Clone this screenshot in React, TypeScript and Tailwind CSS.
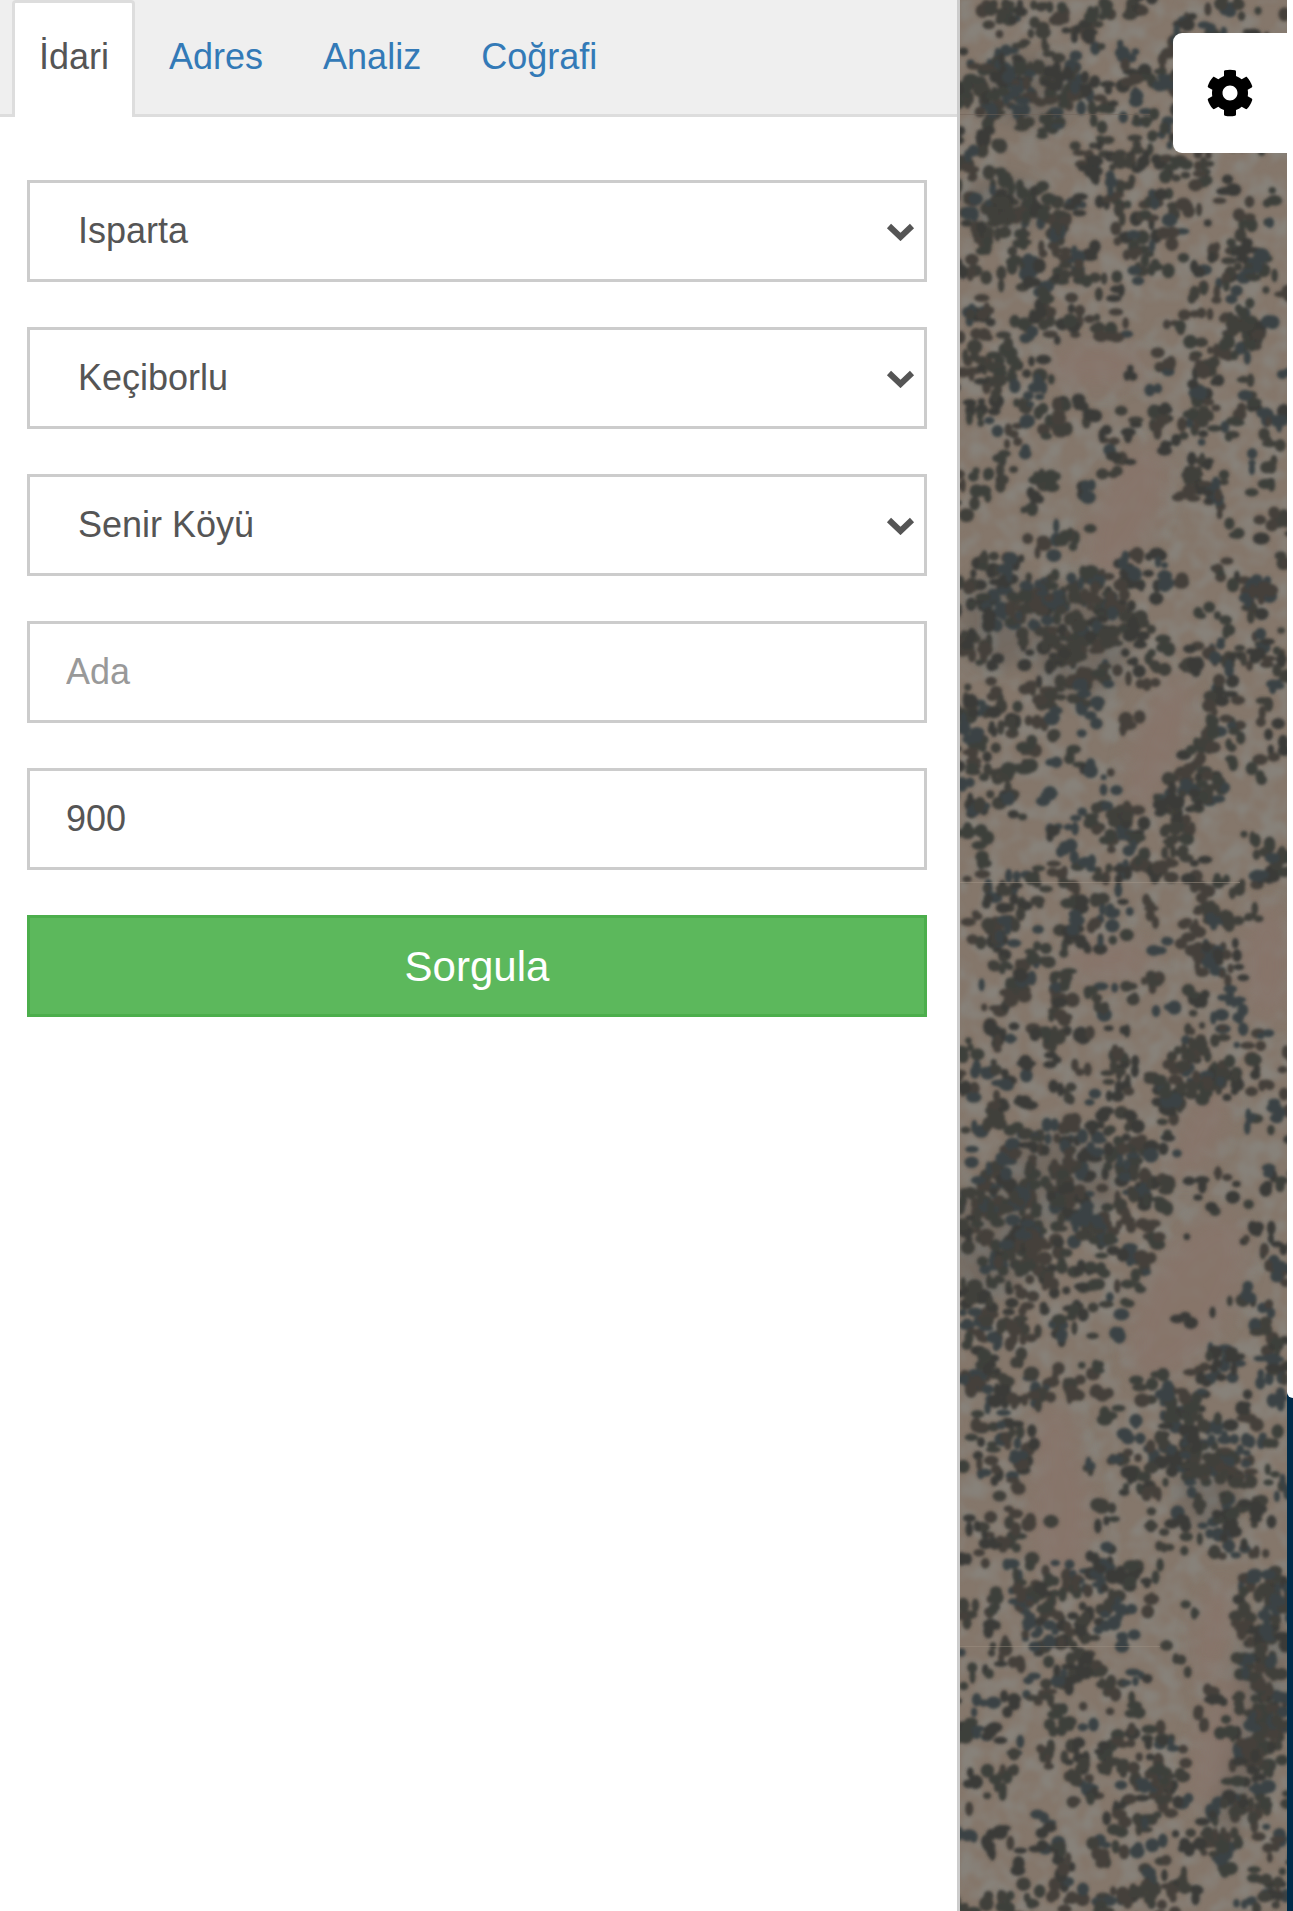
import { FaCog } from "react-icons/fa";

const tabs = ["Adres", "Analiz", "Coğrafi"];
const selects = ["Isparta", "Keçiborlu", "Senir Köyü"];

// clearings in the aerial photo: [cx, cy, rx, ry, rotation]
const clearings = [
  [167, 512, 30, 70, 25],
  [198, 743, 24, 70, 20],
  [228, 1298, 42, 92, 30],
  [100, 1511, 30, 70, 0],
  [253, 1633, 16, 50, 10],
  [240, 1133, 20, 50, 25],
  [307, 963, 24, 60, 0],
  [258, 1740, 22, 68, 15],
  [137, 365, 50, 22, 0],
  [150, 960, 46, 20, 0],
  [95, 1440, 22, 34, 0],
];

// darker stands of trees
const stands = [
  [70, 90, 50, 34, 0],
  [40, 205, 40, 28, 0],
  [290, 1720, 26, 120, 12],
  [30, 1240, 40, 60, 0],
  [100, 1180, 60, 50, 0],
  [120, 640, 50, 60, 0],
  [250, 1490, 34, 40, 0],
  [40, 620, 40, 50, 0],
];

function inEllipse(x: number, y: number, e: number[], grow: number) {
  const a = (-e[4] * Math.PI) / 180;
  const dx = x - e[0];
  const dy = y - e[1];
  const u = (dx * Math.cos(a) - dy * Math.sin(a)) / (e[2] * grow);
  const v = (dx * Math.sin(a) + dy * Math.cos(a)) / (e[3] * grow);
  return u * u + v * v < 1;
}

// seeded scatter, so the trees land in the same place on every load
function makeTrees() {
  let s = 20240611;
  const rnd = () => {
    s = (s + 0x6d2b79f5) | 0;
    let t = Math.imul(s ^ (s >>> 15), 1 | s);
    t = (t + Math.imul(t ^ (t >>> 7), 61 | t)) ^ t;
    return ((t ^ (t >>> 14)) >>> 0) / 4294967296;
  };
  const colors = ["#3a3b38", "#3e3f3b", "#413f3a", "#3b4345", "#45413b"];
  const out: { x: number; y: number; rx: number; ry: number; c: string }[] = [];
  for (let i = 0; i < 9000; i++) {
    const x = rnd() * 327;
    const y = rnd() * 1911;
    let p = 0.2 + 0.08 * Math.sin(x / 37 + y / 53) + 0.06 * Math.sin(y / 91 - x / 29);
    if (stands.some((e) => inEllipse(x, y, e, 1.2))) p = 0.5;
    if (clearings.some((e) => inEllipse(x, y, e, 1))) p = 0.01;
    if (rnd() > p) continue;
    // crowns grow in small clumps
    const clump = 1 + Math.floor(rnd() * 4);
    const c = colors[Math.floor(rnd() * colors.length)];
    for (let j = 0; j < clump; j++) {
      out.push({
        x: x + (rnd() - 0.5) * 20,
        y: y + (rnd() - 0.5) * 20,
        rx: 3 + rnd() * 5,
        ry: 3 + rnd() * 4.5,
        c,
      });
    }
  }
  return out;
}

const trees = makeTrees();

function AerialPhoto() {
  return (
    <svg className="block w-full h-full" viewBox="0 0 327 1911" preserveAspectRatio="none">
      <defs>
        <filter id="ground" x="0" y="0" width="100%" height="100%" colorInterpolationFilters="sRGB">
          <feTurbulence type="fractalNoise" baseFrequency="0.05" numOctaves="2" seed="11" />
          <feColorMatrix values="0 0 0 0 0.53  0 0 0 0 0.51  0 0 0 0 0.48  3 0 0 0 -1.2" />
          <feGaussianBlur stdDeviation="1.5" />
        </filter>
        <filter id="crowns" x="0" y="0" width="100%" height="100%">
          <feGaussianBlur stdDeviation="1.4" />
        </filter>
        <filter id="soft" x="-50%" y="-50%" width="200%" height="200%">
          <feGaussianBlur stdDeviation="10" />
        </filter>
      </defs>
      <rect width="327" height="1911" fill="#85776b" />
      <rect width="327" height="1911" filter="url(#ground)" />
      <g filter="url(#soft)" fill="#2f3a3c" opacity="0.2">
        {stands.map(([cx, cy, rx, ry, r], i) => (
          <ellipse key={i} cx={cx} cy={cy} rx={rx} ry={ry} transform={`rotate(${r} ${cx} ${cy})`} />
        ))}
      </g>
      <g filter="url(#soft)" fill="#88756a" opacity="0.8">
        {clearings.map(([cx, cy, rx, ry, r], i) => (
          <ellipse key={i} cx={cx} cy={cy} rx={rx} ry={ry} transform={`rotate(${r} ${cx} ${cy})`} />
        ))}
      </g>
      <g filter="url(#crowns)">
        {trees.map((t, i) => (
          <ellipse key={i} cx={t.x} cy={t.y} rx={t.rx} ry={t.ry} fill={t.c} />
        ))}
      </g>
      {/* tile seams */}
      <rect y="114" width="190" height="1" fill="#6f6258" opacity="0.5" />
      <rect y="882" width="280" height="1" fill="#a39587" opacity="0.5" />
      <rect y="1646" width="200" height="1" fill="#a39587" opacity="0.4" />
    </svg>
  );
}

function Chevron() {
  return (
    <svg className="absolute right-[12px] top-[42px]" width="29" height="19" viewBox="0 0 29 19">
      <path d="M3 4 L14.5 15 L26 4" fill="none" stroke="#555555" strokeWidth="6" />
    </svg>
  );
}

export default function App() {
  return (
    <div className="flex w-[1293px] h-[1911px] overflow-hidden bg-[#002b49] font-['Liberation_Sans',Arial,sans-serif]">
      <div className="w-[960px] shrink-0 bg-white border-r-[3px] border-[#ccc]">
        <ul className="flex h-[117px] pl-[12px] bg-[#efefef] border-b-[3px] border-[#ddd]">
          <li className="h-[117px] pl-[24px] pr-[23px] mr-[7px] bg-white border-[3px] border-b-0 border-[#ddd] rounded-t-[4px] text-[36px] leading-[51px] pt-[28px] text-[#555]">
            İdari
          </li>
          {tabs.map((t) => (
            <li key={t} className="px-[27px] mr-[6px] text-[36px] leading-[51px] pt-[31px] text-[#337ab7]">
              {t}
            </li>
          ))}
        </ul>
        <form className="flex flex-col gap-[45px] pt-[63px] pl-[27px] pr-[30px]">
          {selects.map((s) => (
            <div key={s} className="relative h-[102px]">
              <select
                defaultValue={s}
                className="w-full h-full appearance-none bg-white border-[3px] border-[#ccc] pl-[48px] text-[36px] text-[#555] outline-none"
              >
                <option>{s}</option>
              </select>
              <Chevron />
            </div>
          ))}
          <input
            placeholder="Ada"
            className="h-[102px] border-[3px] border-[#ccc] px-[36px] text-[36px] text-[#555] placeholder:text-[#999] outline-none"
          />
          <input
            defaultValue="900"
            className="h-[102px] border-[3px] border-[#ccc] px-[36px] text-[36px] text-[#555] outline-none"
          />
          <button
            type="button"
            className="h-[102px] bg-[#5cb85c] border-[3px] border-[#4cae4c] text-white text-[42px]"
          >
            Sorgula
          </button>
        </form>
      </div>
      <div className="relative w-[327px] shrink-0">
        <AerialPhoto />
        <div className="absolute right-0 top-[33px] w-[114px] h-[120px] bg-white rounded-l-[9px] flex items-center justify-center">
          <FaCog className="w-[48px] h-[48px] text-black" />
        </div>
      </div>
      <div className="w-[6px] h-[1398px] bg-white rounded-bl-[6px]" />
    </div>
  );
}
